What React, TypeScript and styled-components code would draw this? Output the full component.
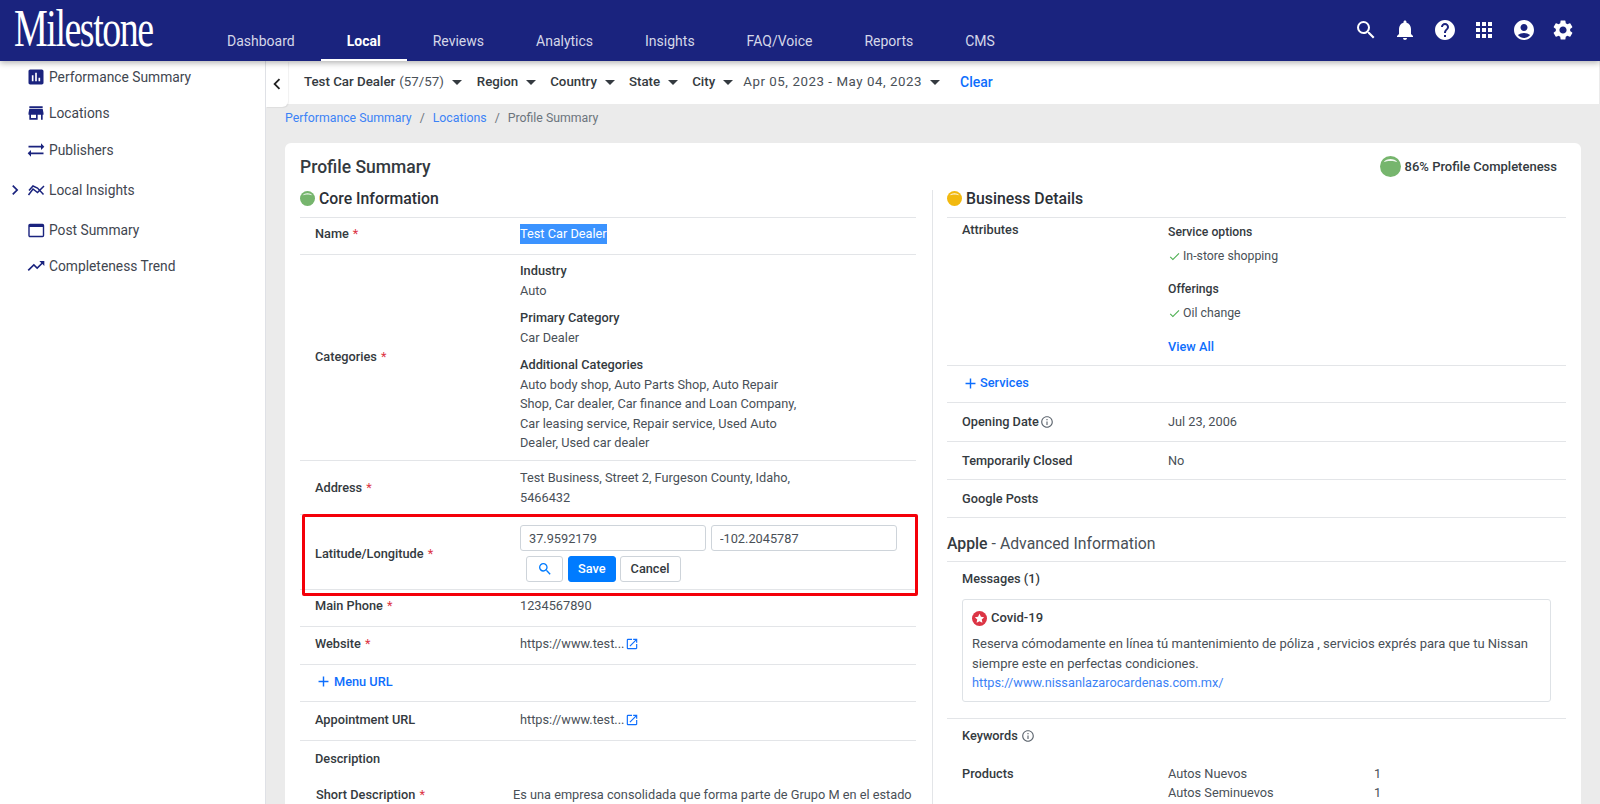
import React from "react";
import styled, { createGlobalStyle } from "styled-components";
import {
  MdAccountCircle,
  MdApps,
  MdAssessment,
  MdCheck,
  MdChevronLeft,
  MdChevronRight,
  MdHelp,
  MdInfoOutline,
  MdNotifications,
  MdOpenInNew,
  MdSearch,
  MdSettings,
  MdStore,
  MdSyncAlt,
  MdTrendingUp,
  MdAdd,
} from "react-icons/md";

const NAVY = "#1a237e";
const LINK = "#0d6efd";

const GlobalStyle = createGlobalStyle`
  html, body {
    margin: 0;
    height: 804px;
    overflow: hidden;
    background: #ebebeb;
    font-family: Roboto, "Liberation Sans", sans-serif;
    font-size: 12.75px;
    color: #495057;
  }
  * { box-sizing: border-box; }
`;

const Page = styled.div`
  height: 804px;
  display: flex;
  flex-direction: column;
  overflow: hidden;
`;

const Header = styled.header`
  height: 61px;
  flex: none;
  background: ${NAVY};
  display: flex;
  align-items: stretch;
  box-shadow: 0 2px 6px rgba(0, 0, 0, 0.3);
  position: relative;
  z-index: 3;
`;

const LogoBox = styled.div`
  width: 201px;
  flex: none;
  padding: 3px 0 0 14px;
`;

const LogoText = styled.span`
  display: block;
  font-family: "Liberation Serif", serif;
  font-size: 52px;
  line-height: 52px;
  letter-spacing: -2px;
  color: #fff;
  transform: scaleX(0.73);
  transform-origin: left center;
`;

const Nav = styled.nav`
  display: flex;
  flex: 1;
`;

const NavItem = styled.a<{ $active?: boolean }>`
  padding: 32px 26px 0;
  font-size: 14px;
  line-height: 18px;
  font-weight: ${(p) => (p.$active ? 700 : 400)};
  color: ${(p) => (p.$active ? "#fff" : "#d5d7e8")};
  border-bottom: 2px solid ${(p) => (p.$active ? "#fff" : "transparent")};
`;

const HeaderIcons = styled.div`
  display: flex;
  align-items: center;
  gap: 15.5px;
  padding: 0 25px 0 0;
  color: #fff;
  font-size: 24px;
  height: 59px;
  svg { display: block; }
`;

const Body = styled.div`
  flex: 1;
  display: flex;
  min-height: 0;
`;

const Sidebar = styled.aside`
  width: 266px;
  flex: none;
  background: #fff;
  border-right: 1px solid #dfe1e6;
  padding-top: 4px;
`;

const SideItem = styled.div<{ $h: number }>`
  height: ${(p) => p.$h}px;
  display: flex;
  align-items: center;
  padding-left: 26px;
  gap: 3px;
  font-size: 13.8px;
  color: #3f4650;
  position: relative;
  svg.icon { color: ${NAVY}; font-size: 20px; flex: none; }
`;

const SideCaret = styled.span`
  position: absolute;
  left: 5px;
  top: 50%;
  transform: translateY(-50%);
  font-size: 20px;
  display: flex;
  color: ${NAVY};
`;

const Main = styled.main`
  flex: 1;
  min-width: 0;
  display: flex;
  flex-direction: column;
  position: relative;
`;

const Collapse = styled.button`
  position: absolute;
  left: 0;
  top: 0;
  width: 22px;
  height: 46px;
  padding: 0;
  border: 0;
  border-radius: 0 0 6px 0;
  background: #fff;
  color: #222;
  font-size: 26px;
  display: flex;
  align-items: center;
  justify-content: center;
  box-shadow: 1px 1px 1px rgba(0, 0, 0, 0.06);
  z-index: 1;
`;

const FilterBar = styled.div`
  height: 43px;
  flex: none;
  background: #fff;
  display: flex;
  align-items: center;
  padding: 0 0 2px 38px;
  margin-right: 1px;
  font-size: 13.3px;
  color: #343a40;
`;

const Filter = styled.span<{ $gap?: number }>`
  display: flex;
  align-items: center;
  font-weight: 500;
  margin-right: ${(p) => p.$gap ?? 14}px;
  white-space: nowrap;
`;

const Light = styled.span<{ $date?: boolean }>`
  font-weight: 400;
  margin-left: ${(p) => (p.$date ? 0 : 4)}px;
  letter-spacing: ${(p) => (p.$date ? "0.55px" : "0")};
  color: #495057;
`;

const Caret = styled.i`
  width: 0;
  height: 0;
  margin-left: 8px;
  margin-top: 2px;
  border-left: 5.5px solid transparent;
  border-right: 5.5px solid transparent;
  border-top: 5.5px solid #343a40;
`;

const ClearLink = styled.a`
  color: ${LINK};
  font-weight: 500;
  margin-left: 7px;
  font-size: 14px;
`;

const Crumbs = styled.div`
  height: 39px;
  flex: none;
  padding: 6px 0 0 19px;
  font-size: 12.3px;
  line-height: 16px;
  color: #6c757d;
  display: flex;
  gap: 8px;
  a { color: #3b82f6; }
`;

const Card = styled.section`
  margin: 0 19px 0 19px;
  flex: 1;
  background: #fff;
  border-radius: 6px 6px 0 0;
  padding: 12px 15px 0 15px;
  display: flex;
  flex-direction: column;
  min-height: 0;
  overflow: hidden;
`;

const CardTop = styled.div`
  display: flex;
  justify-content: space-between;
  height: 35px;
  flex: none;
`;

const CardTitle = styled.h1`
  margin: 0;
  padding-top: 1px;
  font-size: 17.5px;
  line-height: 22px;
  font-weight: 500;
  color: #343a40;
`;

const Completeness = styled.div`
  display: flex;
  align-items: center;
  gap: 4px;
  height: 22px;
  font-size: 13px;
  font-weight: 500;
  color: #343a40;
  padding-right: 9px;
`;

const Columns = styled.div`
  flex: 1;
  display: grid;
  grid-template-columns: 633px 1fr;
  min-height: 0;
`;

const Row = styled.div<{ $h: number; $top?: boolean; $flat?: boolean; $lift?: number; $drop?: number }>`
  min-height: ${(p) => p.$h}px;
  display: grid;
  grid-template-columns: 206px 1fr;
  align-items: ${(p) => (p.$top ? "start" : "center")};
  padding-left: 15px;
  padding-top: ${(p) => p.$drop ?? 0}px;
  padding-bottom: ${(p) => p.$lift ?? 0}px;
  border-bottom: ${(p) => (p.$flat ? "none" : "1px solid #e3e5e8")};
  line-height: 19.5px;
`;

const Column = styled.div<{ $right?: boolean }>`
  padding: ${(p) => (p.$right ? "0 0 0 14px" : "0 16px 0 0")};
  border-right: ${(p) => (p.$right ? "none" : "1px solid #e3e5e8")};
  ${Row} {
    grid-template-columns: ${(p) => (p.$right ? "206px" : "205px")} 1fr;
  }
`;

const SectionHead = styled.div`
  height: 28px;
  padding-bottom: 10px;
  display: flex;
  align-items: center;
  gap: 4px;
  font-size: 15.8px;
  font-weight: 500;
  color: #2b3036;
  border-bottom: 1px solid #e3e5e8;
`;

const Label = styled.div<{ $x?: number; $y?: number }>`
  font-weight: 500;
  color: #343a40;
  display: flex;
  align-items: center;
  margin-left: ${(p) => p.$x ?? 0}px;
  margin-top: ${(p) => p.$y ?? 0}px;
`;

const Star = styled.span`
  color: #dc3545;
  font-weight: 400;
  margin-left: 4px;
`;

const Value = styled.div<{ $w?: number }>`
  max-width: ${(p) => (p.$w ? `${p.$w}px` : "none")};
`;

const LongValue = styled.div`
  margin-left: -7px;
  white-space: nowrap;
`;

const Selected = styled.span`
  display: inline-block;
  background: #3b93ff;
  color: #fff;
  line-height: 20px;
`;

const Block = styled.div`
  margin-bottom: 8px;
  &:last-child { margin-bottom: 0; }
`;

const Sub = styled.div`
  font-weight: 500;
  color: #343a40;
`;

const Inputs = styled.div`
  display: flex;
  gap: 5px;
  margin-bottom: 5px;
`;

const Input = styled.input`
  width: 186px;
  height: 26px;
  padding: 0 8px;
  border: 1px solid #ced4da;
  border-radius: 3px;
  font: inherit;
  color: #495057;
`;

const Buttons = styled.div`
  display: flex;
  gap: 4px;
  padding-left: 6px;
`;

const Btn = styled.button<{ $primary?: boolean; $icon?: boolean }>`
  height: 26px;
  padding: 0 ${(p) => (p.$primary ? "9px" : p.$icon ? "9.5px" : "10px")};
  margin-right: ${(p) => (p.$icon ? "1px" : "0")};
  border: 1px solid ${(p) => (p.$primary ? "#007bff" : "#ced4da")};
  border-radius: 3px;
  background: ${(p) => (p.$primary ? "#007bff" : "#fff")};
  color: ${(p) => (p.$primary ? "#fff" : p.$icon ? "#007bff" : "#343a40")};
  font: inherit;
  font-weight: 500;
  font-size: ${(p) => (p.$icon ? "16px" : "12.75px")};
  display: flex;
  align-items: center;
`;

const Highlight = styled.div`
  position: absolute;
  left: 36px;
  top: 453px;
  width: 616px;
  height: 82px;
  border: 3.5px solid #f40009;
  border-radius: 2px;
  pointer-events: none;
`;

const AddLink = styled.a<{ $gap?: number }>`
  color: ${LINK};
  font-weight: 500;
  display: flex;
  align-items: center;
  gap: ${(p) => p.$gap ?? 2}px;
  svg { font-size: 17px; }
`;

const OutIcon = styled.span`
  color: ${LINK};
  font-size: 14px;
  margin-left: 1px;
  svg { display: inline-block; vertical-align: -3px; }
`;

const InfoIcon = styled.span<{ $gap?: number }>`
  display: inline-flex;
  color: #5f6770;
  font-size: 14px;
  margin-left: ${(p) => p.$gap ?? 1}px;
`;

const Check = styled.div`
  display: flex;
  align-items: center;
  gap: 2px;
  font-size: 12.3px;
  margin-top: 6px;
  svg { color: #4caf50; font-size: 13px; }
`;

const AttrBox = styled.div`
  padding-top: 5px;
  line-height: 18px;
`;

const AttrTitle = styled(Sub)<{ $space?: number }>`
  font-size: 12.2px;
  margin-top: ${(p) => p.$space ?? 0}px;
`;

const ViewAll = styled.a`
  color: ${LINK};
  font-weight: 500;
  display: block;
  margin-top: 16px;
`;

const AppleHead = styled.div`
  height: 44px;
  padding-top: 8px;
  display: flex;
  align-items: center;
  font-size: 15.8px;
  border-bottom: 1px solid #e3e5e8;
  color: #495057;
  b { font-weight: 500; color: #343a40; margin-right: 4px; }
`;

const MessageArea = styled.div`
  padding: 9px 15px 16px;
  border-bottom: 1px solid #e3e5e8;
`;

const MessageBox = styled.div`
  margin-top: 13px;
  height: 103px;
  border: 1px solid #dee2e6;
  border-radius: 3px;
  padding: 8px 9px;
  font-size: 13px;
  line-height: 19.5px;
  a { color: #3b82f6; font-size: 12.75px; }
`;

const MessageTitle = styled.div`
  display: flex;
  align-items: center;
  gap: 4px;
  font-weight: 500;
  color: #343a40;
  height: 20px;
  margin-bottom: 6px;
`;

const KeywordHead = styled.div`
  padding: 9px 15px 0;
  height: 45px;
`;

const KeywordRow = styled.div`
  display: grid;
  grid-template-columns: 206px 206px 1fr;
  padding-left: 15px;
  line-height: 19px;
`;

const DotSvg = styled.svg`
  flex: none;
`;

const Dot = ({ color, size }: { color: string; size: number }) => (
  <DotSvg width={size} height={size} viewBox="0 0 20 20">
    <circle cx="10" cy="10" r="10" fill={color} />
    <path d="M3.5 6 C6 1.8 14 1.8 16.5 6 C13 4.2 7 4.2 3.5 6 Z" fill="#fff" opacity="0.9" />
  </DotSvg>
);

const InsightsIcon = () => (
  <svg className="icon" width="20" height="20" viewBox="0 0 20 20" fill="none" stroke="currentColor" strokeWidth="1.5">
    <path d="M2.5 15 L7 9 L11.5 12.5 L18 6" />
    <path d="M3 10.5 L7 6 L11.5 8 L17.5 14.5" />
  </svg>
);

const PostIcon = () => (
  <svg className="icon" width="20" height="20" viewBox="0 0 20 20" fill="none" stroke="currentColor">
    <rect x="3" y="4.5" width="14.5" height="12" rx="1" strokeWidth="1.4" />
    <path d="M3 6 H17.5" strokeWidth="2" />
  </svg>
);

const CovidIcon = () => (
  <DotSvg width="15" height="15" viewBox="0 0 20 20">
    <circle cx="10" cy="10" r="10" fill="#dc3545" />
    <path d="M10 3.8l1.9 4 4.3.5-3.2 3 .9 4.4-3.9-2.2-3.9 2.2.9-4.4-3.2-3 4.3-.5z" fill="#fff" />
  </DotSvg>
);

const ExternalLink = () => (
  <OutIcon>
    <MdOpenInNew />
  </OutIcon>
);

const navItems = ["Dashboard", "Local", "Reviews", "Analytics", "Insights", "FAQ/Voice", "Reports", "CMS"];

export default function App() {
  return (
    <Page>
      <GlobalStyle />
      <Header>
        <LogoBox>
          <LogoText>Milestone</LogoText>
        </LogoBox>
        <Nav>
          {navItems.map((item) => (
            <NavItem key={item} $active={item === "Local"}>
              {item}
            </NavItem>
          ))}
        </Nav>
        <HeaderIcons>
          <MdSearch />
          <MdNotifications />
          <MdHelp />
          <MdApps />
          <MdAccountCircle />
          <MdSettings />
        </HeaderIcons>
      </Header>
      <Body>
        <Sidebar>
          <SideItem $h={23}>
            <MdAssessment className="icon" />
            Performance Summary
          </SideItem>
          <SideItem $h={50}>
            <MdStore className="icon" />
            Locations
          </SideItem>
          <SideItem $h={24}>
            <MdSyncAlt className="icon" />
            Publishers
          </SideItem>
          <SideItem $h={56}>
            <SideCaret>
              <MdChevronRight />
            </SideCaret>
            <InsightsIcon />
            Local Insights
          </SideItem>
          <SideItem $h={24}>
            <PostIcon />
            Post Summary
          </SideItem>
          <SideItem $h={48}>
            <MdTrendingUp className="icon" />
            Completeness Trend
          </SideItem>
        </Sidebar>
        <Main>
          <Collapse>
            <MdChevronLeft />
          </Collapse>
          <FilterBar>
            <Filter $gap={15}>
              Test Car Dealer<Light>(57/57)</Light>
              <Caret />
            </Filter>
            <Filter>
              Region
              <Caret />
            </Filter>
            <Filter>
              Country
              <Caret />
            </Filter>
            <Filter>
              State
              <Caret />
            </Filter>
            <Filter $gap={10}>
              City
              <Caret />
            </Filter>
            <Filter $gap={13}>
              <Light $date>Apr 05, 2023 - May 04, 2023</Light>
              <Caret />
            </Filter>
            <ClearLink>Clear</ClearLink>
          </FilterBar>
          <Crumbs>
            <a>Performance Summary</a>
            <span>/</span>
            <a>Locations</a>
            <span>/</span>
            <span>Profile Summary</span>
          </Crumbs>
          <Card>
            <CardTop>
              <CardTitle>Profile Summary</CardTitle>
              <Completeness>
                <Dot color="#76b56d" size={21} />
                86% Profile Completeness
              </Completeness>
            </CardTop>
            <Columns>
              <Column>
                <SectionHead>
                  <Dot color="#76b56d" size={15} />
                  Core Information
                </SectionHead>
                <Row $h={37} $lift={4}>
                  <Label>
                    Name<Star>*</Star>
                  </Label>
                  <Value>
                    <Selected>Test Car Dealer</Selected>
                  </Value>
                </Row>
                <Row $h={206} $lift={1}>
                  <Label>
                    Categories<Star>*</Star>
                  </Label>
                  <Value $w={285}>
                    <Block>
                      <Sub>Industry</Sub>
                      Auto
                    </Block>
                    <Block>
                      <Sub>Primary Category</Sub>
                      Car Dealer
                    </Block>
                    <Block>
                      <Sub>Additional Categories</Sub>
                      Auto body shop, Auto Parts Shop, Auto Repair Shop, Car dealer, Car finance and Loan Company, Car
                      leasing service, Repair service, Used Auto Dealer, Used car dealer
                    </Block>
                  </Value>
                </Row>
                <Row $h={54}>
                  <Label>
                    Address<Star>*</Star>
                  </Label>
                  <Value $w={285}>Test Business, Street 2, Furgeson County, Idaho, 5466432</Value>
                </Row>
                <Row $h={75} $drop={3}>
                  <Label>
                    Latitude/Longitude<Star>*</Star>
                  </Label>
                  <Value>
                    <Inputs>
                      <Input defaultValue="37.9592179" />
                      <Input defaultValue="-102.2045787" />
                    </Inputs>
                    <Buttons>
                      <Btn $icon>
                        <MdSearch />
                      </Btn>
                      <Btn $primary>Save</Btn>
                      <Btn>Cancel</Btn>
                    </Buttons>
                  </Value>
                </Row>
                <Row $h={37} $lift={4}>
                  <Label>
                    Main Phone<Star>*</Star>
                  </Label>
                  <Value>1234567890</Value>
                </Row>
                <Row $h={38} $lift={3}>
                  <Label>
                    Website<Star>*</Star>
                  </Label>
                  <Value>
                    https://www.test...
                    <ExternalLink />
                  </Value>
                </Row>
                <Row $h={37} $lift={3}>
                  <AddLink>
                    <MdAdd />
                    Menu URL
                  </AddLink>
                </Row>
                <Row $h={39} $lift={3}>
                  <Label>Appointment URL</Label>
                  <Value>
                    https://www.test...
                    <ExternalLink />
                  </Value>
                </Row>
                <Row $h={36} $flat>
                  <Label>Description</Label>
                </Row>
                <Row $h={36} $flat>
                  <Label $x={1}>
                    Short Description<Star>*</Star>
                  </Label>
                  <LongValue>Es una empresa consolidada que forma parte de Grupo M en el estado</LongValue>
                </Row>
              </Column>
              <Column $right>
                <SectionHead>
                  <Dot color="#f2b90f" size={15} />
                  Business Details
                </SectionHead>
                <Row $h={148} $top>
                  <Label $y={2}>Attributes</Label>
                  <AttrBox>
                    <AttrTitle>Service options</AttrTitle>
                    <Check>
                      <MdCheck />
                      In-store shopping
                    </Check>
                    <AttrTitle $space={15}>Offerings</AttrTitle>
                    <Check>
                      <MdCheck />
                      Oil change
                    </Check>
                    <ViewAll>View All</ViewAll>
                  </AttrBox>
                </Row>
                <Row $h={37} $lift={2}>
                  <AddLink $gap={1}>
                    <MdAdd />
                    Services
                  </AddLink>
                </Row>
                <Row $h={39}>
                  <Label>
                    Opening Date
                    <InfoIcon>
                      <MdInfoOutline />
                    </InfoIcon>
                  </Label>
                  <Value>Jul 23, 2006</Value>
                </Row>
                <Row $h={38}>
                  <Label>Temporarily Closed</Label>
                  <Value>No</Value>
                </Row>
                <Row $h={38}>
                  <Label>Google Posts</Label>
                </Row>
                <AppleHead>
                  <b>Apple</b> - Advanced Information
                </AppleHead>
                <MessageArea>
                  <Label>Messages (1)</Label>
                  <MessageBox>
                    <MessageTitle>
                      <CovidIcon />
                      Covid-19
                    </MessageTitle>
                    Reserva cómodamente en línea tú mantenimiento de póliza , servicios exprés para que tu Nissan
                    siempre este en perfectas condiciones.
                    <br />
                    <a>https://www.nissanlazarocardenas.com.mx/</a>
                  </MessageBox>
                </MessageArea>
                <KeywordHead>
                  <Label>
                    Keywords
                    <InfoIcon $gap={3}>
                      <MdInfoOutline />
                    </InfoIcon>
                  </Label>
                </KeywordHead>
                <KeywordRow>
                  <Label>Products</Label>
                  <span>Autos Nuevos</span>
                  <span>1</span>
                </KeywordRow>
                <KeywordRow>
                  <span />
                  <span>Autos Seminuevos</span>
                  <span>1</span>
                </KeywordRow>
              </Column>
            </Columns>
          </Card>
          <Highlight />
        </Main>
      </Body>
    </Page>
  );
}
